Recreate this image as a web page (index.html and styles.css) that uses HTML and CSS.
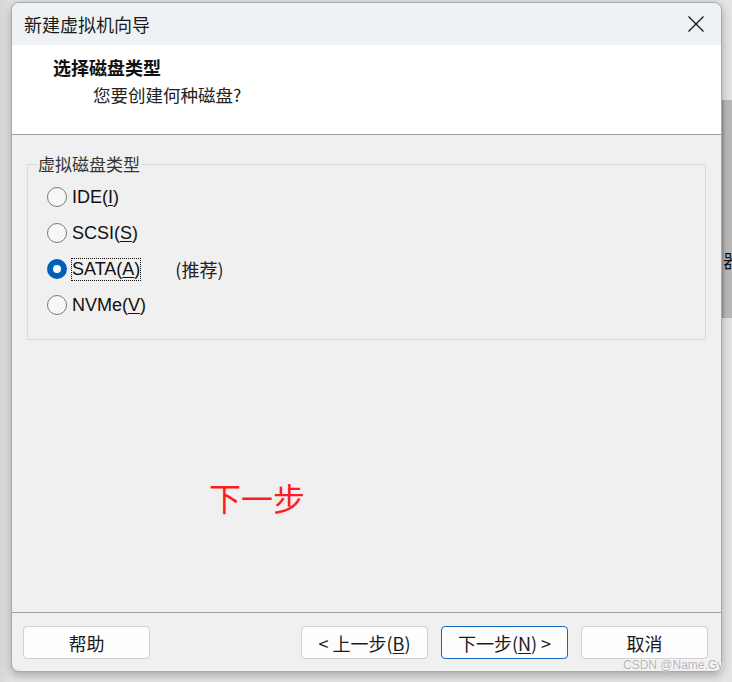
FILE: index.html
```html
<!DOCTYPE html>
<html lang="zh-CN">
<head>
<meta charset="utf-8">
<title>新建虚拟机向导</title>
<link rel="stylesheet" href="styles.css">
</head>
<body>
<div class="screen">
  <div class="backdrop">
    <div class="backdrop-panel"><span class="backdrop-glyph">器</span></div>
  </div>
  <div class="window">
    <div class="titlebar">
      <span class="title">新建虚拟机向导</span>
      <span class="close" aria-label="关闭">
        <svg width="18" height="18" viewBox="0 0 18 18"><path d="M1.5 1.5 L16.5 16.5 M16.5 1.5 L1.5 16.5" stroke="#1b1b1b" stroke-width="1.4" fill="none"/></svg>
      </span>
    </div>
    <div class="header">
      <div class="h-title">选择磁盘类型</div>
      <div class="h-sub">您要创建何种磁盘?</div>
    </div>
    <div class="body">
      <fieldset class="group">
        <legend>虚拟磁盘类型</legend>
        <div class="radio-row"><span class="radio"></span><span class="label">IDE(<u>I</u>)</span></div>
        <div class="radio-row"><span class="radio"></span><span class="label">SCSI(<u>S</u>)</span></div>
        <div class="radio-row"><span class="radio checked"></span><span class="label focus">SATA(<u>A</u>)</span><span class="hint">(推荐)</span></div>
        <div class="radio-row"><span class="radio"></span><span class="label">NVMe(<u>V</u>)</span></div>
      </fieldset>
      <div class="note">下一步</div>
    </div>
    <div class="footer">
      <span class="btn">帮助</span>
      <span class="spacer"></span>
      <span class="btn">&lt; 上一步(<u>B</u>)</span>
      <span class="btn primary">下一步(<u>N</u>) &gt;</span>
      <span class="btn">取消</span>
    </div>
  </div>
  <div class="watermark">CSDN @Name.Gy</div>
</div>
</body>
</html>
```

FILE: styles.css
```css
* { box-sizing: border-box; }
html, body { margin: 0; padding: 0; }
body {
  width: 732px;
  height: 682px;
  overflow: hidden;
  background: #dcdcdc;
  font-family: "Noto Sans CJK SC", sans-serif;
}
.screen {
  position: relative;
  width: 732px;
  height: 682px;
  padding: 2px 0 0 11px;
  background: linear-gradient(90deg, #d6d6d6 0px, #e2e2e2 11px);
}
.backdrop {
  position: absolute;
  left: 722px;
  top: 0;
  width: 10px;
  height: 682px;
  background: #e4e4e4;
  overflow: hidden;
}
.backdrop-panel {
  position: absolute;
  left: 0;
  top: 100px;
  width: 10px;
  height: 218px;
  background: #bababa;
  border-left: 2px solid #a2a2a2;
  overflow: hidden;
}
.backdrop-glyph {
  position: absolute;
  left: -1px;
  top: 148px;
  font-size: 18px;
  line-height: 24px;
  color: #111;
  white-space: nowrap;
}
.window {
  position: relative;
  width: 711px;
  height: 670px;
  border: 1px solid #a9a9a9;
  border-radius: 8px;
  overflow: hidden;
  background: #f0f0f0;
  box-shadow: 0 3px 10px rgba(0,0,0,0.28);
  display: flex;
  flex-direction: column;
}
.titlebar {
  height: 42px;
  flex: none;
  background: #eef2f5;
  display: flex;
  align-items: center;
  justify-content: space-between;
  padding: 0 16px 0 12px;
}
.title {
  font-size: 18px;
  color: #1a1a1a;
  line-height: 24px;
}
.close { display: flex; }
.header {
  height: 90px;
  flex: none;
  background: #ffffff;
  border-bottom: 1px solid #a0a0a0;
  padding-top: 10px;
}
.h-title {
  padding-left: 41px;
  font-size: 18px;
  font-weight: bold;
  line-height: 24px;
  color: #111;
}
.h-sub {
  padding-left: 81px;
  margin-top: 4px;
  font-size: 17.5px;
  line-height: 24px;
  color: #222;
}
.body {
  flex: 1;
  border-bottom: 1px solid #a0a0a0;
  display: flex;
  flex-direction: column;
}
.group {
  margin: 19px 15px 0 15px;
  height: 186px;
  border: 1px solid #dadada;
  padding: 5px 0 0 19px;
  min-width: 0;
}
.group legend {
  margin-left: -10px;
  padding: 0 1px;
  font-size: 17px;
  line-height: 20px;
  color: #333;
}
.radio-row {
  height: 36px;
  display: flex;
  align-items: center;
}
.radio {
  width: 20px;
  height: 20px;
  border-radius: 50%;
  border: 1px solid #7a7a7a;
  background: #f7f7f7;
  flex: none;
  margin-right: 4px;
}
.radio.checked {
  border: 6px solid #005fb8;
  background: #ffffff;
}
.label {
  font-family: "Liberation Sans", "Noto Sans CJK SC", sans-serif;
  font-size: 18px;
  line-height: 21px;
  color: #111;
  padding: 0;
  border: 1px dotted transparent;
}
.label.focus { border-color: #111; }
.label u { text-decoration-thickness: 1px; text-underline-offset: 2px; }
.hint {
  margin-left: 34px;
  font-size: 18px;
  color: #222;
}
.note {
  margin-top: 136px;
  padding-left: 197px;
  font-size: 32px;
  line-height: 42px;
  color: #ff1c1c;
}
.footer {
  height: 58px;
  flex: none;
  display: flex;
  align-items: flex-start;
  padding: 13px 13px 0 11px;
  gap: 13px;
}
.spacer { flex: 1; }
.btn {
  width: 127px;
  height: 33px;
  background: #fdfdfd;
  border: 1px solid #d0d0d0;
  border-radius: 4px;
  display: flex;
  align-items: center;
  justify-content: center;
  font-size: 18px;
  color: #1a1a1a;
}
.btn.primary { border-color: #1267c0; }
.btn u { text-decoration-thickness: 1px; text-underline-offset: 2px; }
.watermark {
  position: absolute;
  left: 623px;
  top: 658px;
  font-family: "Liberation Sans", sans-serif;
  font-size: 12px;
  color: #b4b4b4;
  text-shadow: 0 0 2px #fff, 0 0 1px #fff;
}
```
